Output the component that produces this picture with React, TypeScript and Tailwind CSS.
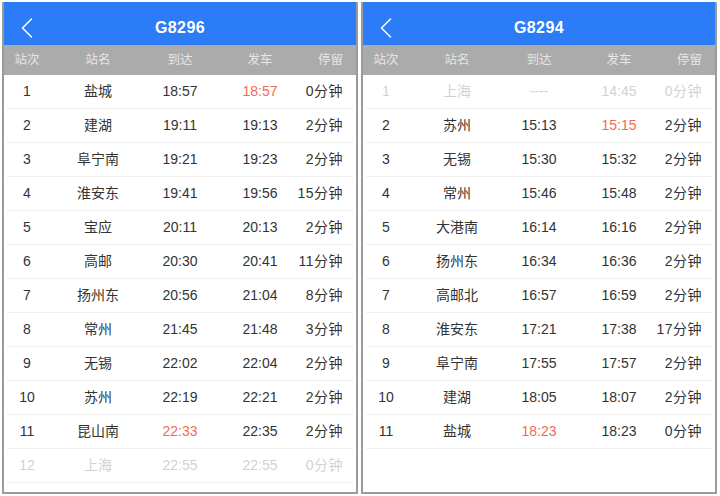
type Stop = {
  no: string;
  name: string;
  arrive: string;
  depart: string;
  stay: string;
  red?: "arrive" | "depart";
  faded?: boolean;
};

const g8296: Stop[] = [
  { no: "1", name: "盐城", arrive: "18:57", depart: "18:57", stay: "0分钟", red: "depart" },
  { no: "2", name: "建湖", arrive: "19:11", depart: "19:13", stay: "2分钟" },
  { no: "3", name: "阜宁南", arrive: "19:21", depart: "19:23", stay: "2分钟" },
  { no: "4", name: "淮安东", arrive: "19:41", depart: "19:56", stay: "15分钟" },
  { no: "5", name: "宝应", arrive: "20:11", depart: "20:13", stay: "2分钟" },
  { no: "6", name: "高邮", arrive: "20:30", depart: "20:41", stay: "11分钟" },
  { no: "7", name: "扬州东", arrive: "20:56", depart: "21:04", stay: "8分钟" },
  { no: "8", name: "常州", arrive: "21:45", depart: "21:48", stay: "3分钟" },
  { no: "9", name: "无锡", arrive: "22:02", depart: "22:04", stay: "2分钟" },
  { no: "10", name: "苏州", arrive: "22:19", depart: "22:21", stay: "2分钟" },
  { no: "11", name: "昆山南", arrive: "22:33", depart: "22:35", stay: "2分钟", red: "arrive" },
  { no: "12", name: "上海", arrive: "22:55", depart: "22:55", stay: "0分钟", faded: true },
];

const g8294: Stop[] = [
  { no: "1", name: "上海", arrive: "----", depart: "14:45", stay: "0分钟", faded: true },
  { no: "2", name: "苏州", arrive: "15:13", depart: "15:15", stay: "2分钟", red: "depart" },
  { no: "3", name: "无锡", arrive: "15:30", depart: "15:32", stay: "2分钟" },
  { no: "4", name: "常州", arrive: "15:46", depart: "15:48", stay: "2分钟" },
  { no: "5", name: "大港南", arrive: "16:14", depart: "16:16", stay: "2分钟" },
  { no: "6", name: "扬州东", arrive: "16:34", depart: "16:36", stay: "2分钟" },
  { no: "7", name: "高邮北", arrive: "16:57", depart: "16:59", stay: "2分钟" },
  { no: "8", name: "淮安东", arrive: "17:21", depart: "17:38", stay: "17分钟" },
  { no: "9", name: "阜宁南", arrive: "17:55", depart: "17:57", stay: "2分钟" },
  { no: "10", name: "建湖", arrive: "18:05", depart: "18:07", stay: "2分钟" },
  { no: "11", name: "盐城", arrive: "18:23", depart: "18:23", stay: "0分钟", red: "arrive" },
];

// column centres copied off the screenshot; last column is right-aligned
const gridCols =
  "grid grid-cols-[46px_96px_68px_92px_minmax(0,1fr)] pr-[13px] items-center whitespace-nowrap";

function Panel({ train, stops }: { train: string; stops: Stop[] }) {
  return (
    <div className="w-[356px] h-[492px] flex flex-col border-x-2 border-b-2 border-[#9b9b9b] bg-white">
      {/* title bar */}
      <div className="relative h-[43px] shrink-0 bg-[#2b7cf6] flex items-center justify-center pt-[8px]">
        <svg
          className="absolute left-[17px] top-[16px]"
          width="12"
          height="20"
          viewBox="0 0 12 20"
          fill="none"
        >
          <polyline
            points="10.5,1 1.5,10 10.5,19"
            stroke="white"
            strokeWidth="1.5"
            strokeLinecap="round"
            strokeLinejoin="round"
          />
        </svg>
        <span className="text-white text-[16px] font-semibold tracking-[0.4px]">{train}</span>
      </div>

      {/* column header */}
      <div className={`${gridCols} h-[30px] shrink-0 bg-[#ababab] text-[12.5px] text-[#e6e6e6]`}>
        <span className="text-center">站次</span>
        <span className="text-center">站名</span>
        <span className="text-center">到达</span>
        <span className="text-center">发车</span>
        <span className="justify-self-end">停留</span>
      </div>

      {/* rows */}
      <div className="flex-1">
        {stops.map((s) => {
          const base = s.faded ? "text-[#d2d2d2]" : "text-[#333333]";
          const red = "text-[#f26a55]";
          return (
            <div key={s.no} className="mx-[3px] border-b border-[#f0f0f0]">
              <div className={`${gridCols} -mx-[3px] h-[33px] text-[14px] ${base}`}>
                <span className="text-center">{s.no}</span>
                <span className="text-center">{s.name}</span>
                <span className={`text-center ${s.red === "arrive" ? red : ""}`}>{s.arrive}</span>
                <span className={`text-center ${s.red === "depart" ? red : ""}`}>{s.depart}</span>
                <span className="justify-self-end tracking-[0.5px]">{s.stay}</span>
              </div>
            </div>
          );
        })}
      </div>
    </div>
  );
}

export default function App() {
  return (
    <div
      className="w-[720px] h-[496px] bg-white flex gap-[3px] pl-[2px] pt-[2px]"
      style={{ fontFamily: '"Liberation Sans", "Noto Sans CJK SC", sans-serif' }}
    >
      <Panel train="G8296" stops={g8296} />
      <Panel train="G8294" stops={g8294} />
    </div>
  );
}
